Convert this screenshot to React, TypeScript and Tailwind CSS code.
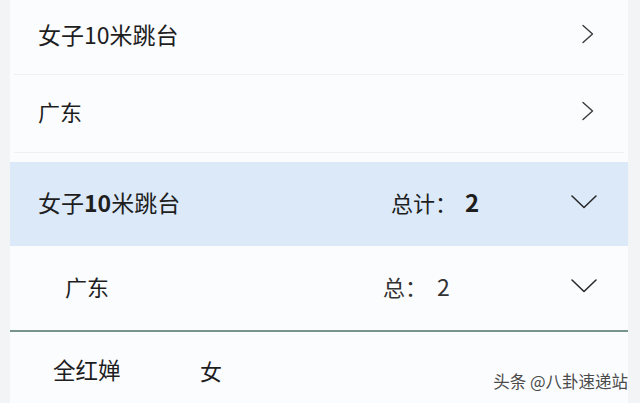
import React from 'react';

const font = { fontFamily: '"Noto Sans CJK SC", "Noto Sans", sans-serif' };

function ChevronRight() {
  return (
    <svg width="14" height="20" viewBox="0 0 14 20" fill="none">
      <path d="M2 1.5 L11.5 10 L2 18.5" stroke="#3a3a3a" strokeWidth="1.4" strokeLinecap="round" strokeLinejoin="round" />
    </svg>
  );
}

function ChevronDown() {
  return (
    <svg width="28" height="16" viewBox="0 0 28 16" fill="none">
      <path d="M2 2 L14 13.5 L26 2" stroke="#2a2a2a" strokeWidth="1.6" strokeLinecap="round" strokeLinejoin="round" />
    </svg>
  );
}

export default function App() {
  return (
    <div className="w-[640px] h-[403px] overflow-hidden bg-[#f3f4f6] pl-[10px] pr-[12px] text-[#1e1e1e]" style={font}>
      <div className="h-full bg-[#fbfcfe] flex flex-col">
        {/* Event row */}
        <div className="h-[75px] mx-[4px] pb-[6px] flex items-center border-b border-[#eef0f4]">
          <span className="pl-[24px] text-[23px] leading-none">女子10米跳台</span>
          <span className="ml-auto w-[48px] mr-[12px] flex justify-center">
            <ChevronRight />
          </span>
        </div>

        {/* Province row */}
        <div className="h-[78px] mx-[4px] pb-[6px] flex items-center border-b border-[#eef0f4]">
          <span className="pl-[24px] text-[22px] leading-none">广东</span>
          <span className="ml-auto w-[48px] mr-[12px] flex justify-center">
            <ChevronRight />
          </span>
        </div>

        <div className="h-[9px]" />

        {/* Expanded event */}
        <div className="h-[84px] pb-[4px] bg-[#dce9f9] flex items-center">
          <span className="pl-[28px] w-[381px] text-[23px] leading-none">
            女子<span className="font-semibold">10</span>米跳台
          </span>
          <span className="text-[22px] leading-none">
            总计：<span className="ml-[8px] text-[24px] font-bold">2</span>
          </span>
          <span className="ml-auto w-[48px] mr-[20px] flex justify-center">
            <ChevronDown />
          </span>
        </div>

        {/* Expanded province */}
        <div className="h-[84px] pb-[4px] flex items-center">
          <span className="pl-[55px] w-[373px] text-[22px] leading-none">广东</span>
          <span className="text-[22px] leading-none text-[#333]">
            总：<span className="ml-[10px] text-[23px]">2</span>
          </span>
          <span className="ml-auto w-[48px] mr-[20px] flex justify-center">
            <ChevronDown />
          </span>
        </div>

        <div className="h-[2px] bg-[#77958e]" />

        {/* Athlete row */}
        <div className="flex-1 flex items-center pt-[4px]">
          <span className="pl-[43px] w-[190px] text-[22.5px] leading-none">全红婵</span>
          <span className="text-[22px] leading-none">女</span>
          <span className="ml-auto mt-[24px] text-[16.5px] leading-none text-[#4a4a4a] [text-shadow:0_0_2px_#fff]">
            头条 @八卦速递站
          </span>
        </div>
      </div>
    </div>
  );
}
